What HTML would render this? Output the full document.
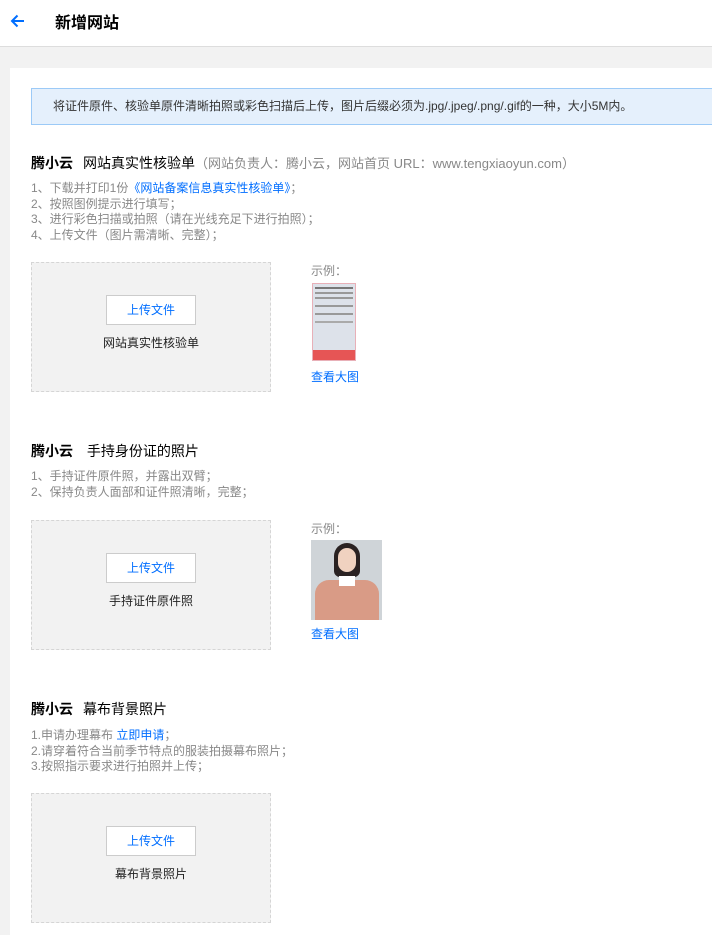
<!DOCTYPE html>
<html><head><meta charset="utf-8"><style>
*{margin:0;padding:0;box-sizing:border-box}
body{width:712px;height:935px;overflow:hidden;background:#f2f2f2;font-family:"Liberation Sans","Noto Sans CJK SC",sans-serif;font-size:12px;color:#333;position:relative}
.a{position:absolute;white-space:nowrap}
.hdr{position:absolute;left:0;top:0;width:712px;height:47px;background:#fff;border-bottom:1px solid #ddd}
.card{position:absolute;left:10px;top:68px;width:702px;height:867px;background:#fff}
.note{position:absolute;left:31px;top:88px;width:690px;height:37px;background:#e5f0fc;border:1px solid #9ccaf7;line-height:35px;padding-left:21px;color:#333}
.t{font-size:14px;color:#000;line-height:16px}
.t b{font-weight:bold;margin-right:10px}
.g{color:#888;line-height:15.5px}
.blue{color:#006eff}
.box{position:absolute;left:31px;width:240px;height:130px;background:#f2f2f2;border:1px dashed #d5d5d5}
.btn{position:absolute;left:74px;top:32px;width:90px;height:30px;background:#fff;border:1px solid #ccc;color:#006eff;text-align:center;line-height:28px}
.lbl{position:absolute;left:0;width:238px;top:71px;text-align:center;color:#222}
.ex{color:#888}
</style></head><body>
<div class="hdr">
<svg class="a" style="left:9px;top:12px" width="18" height="18" viewBox="0 0 18 18"><path d="M15 9H3M8.5 3.5L3 9l5.5 5.5" stroke="#006eff" stroke-width="2" fill="none"/></svg>
<div class="a" style="left:55px;top:9px;font-size:16px;font-weight:bold;color:#000">新增网站</div>
</div>
<div class="card"></div>
<div class="note">将证件原件、核验单原件清晰拍照或彩色扫描后上传，图片后缀必须为.jpg/.jpeg/.png/.gif的一种，大小5M内。</div>

<div class="a t" style="left:31px;top:155px"><b>腾小云</b>网站真实性核验单<span style="color:#888;font-size:13px">（网站负责人：腾小云，网站首页 URL：www.tengxiaoyun.com）</span></div>
<div class="a g" style="left:31px;top:181px">1、下载并打印1份<span class="blue">《网站备案信息真实性核验单》</span>；<br>2、按照图例提示进行填写；<br>3、进行彩色扫描或拍照（请在光线充足下进行拍照）；<br>4、上传文件（图片需清晰、完整）；</div>
<div class="box" style="top:262px"><div class="btn">上传文件</div><div class="lbl">网站真实性核验单</div></div>
<div class="a ex" style="left:311px;top:262px">示例：</div>
<div class="a" style="left:312px;top:283px;width:44px;height:78px;background:#dde2ea;border:1px solid #e8b0b8">
<div style="margin:3px 2px;height:2px;background:#777"></div><div style="margin:3px 2px;height:2px;background:#999"></div><div style="margin:3px 2px;height:2px;background:#999"></div><div style="margin:6px 2px;height:2px;background:#999"></div><div style="margin:6px 2px;height:2px;background:#999"></div><div style="margin:6px 2px;height:2px;background:#aaa"></div>
<div style="position:absolute;left:0;bottom:0;width:42px;height:10px;background:#e65555"></div></div>
<div class="a blue" style="left:311px;top:368px">查看大图</div>

<div class="a t" style="left:31px;top:443px"><b>腾小云</b>&nbsp;手持身份证的照片</div>
<div class="a g" style="left:31px;top:469px">1、手持证件原件照，并露出双臂；<br>2、保持负责人面部和证件照清晰，完整；</div>
<div class="box" style="top:520px"><div class="btn">上传文件</div><div class="lbl">手持证件原件照</div></div>
<div class="a ex" style="left:311px;top:520px">示例：</div>
<div class="a" style="left:311px;top:540px;width:71px;height:80px;background:#cfd4d8;overflow:hidden">
<div style="position:absolute;left:23px;top:3px;width:26px;height:34px;border-radius:13px 13px 6px 6px;background:#2a2222"></div>
<div style="position:absolute;left:27px;top:8px;width:18px;height:24px;border-radius:9px;background:#f0d2c0"></div>
<div style="position:absolute;left:4px;top:40px;width:64px;height:45px;border-radius:14px 14px 0 0;background:#d99b86"></div>
<div style="position:absolute;left:28px;top:36px;width:16px;height:10px;background:#fff"></div></div>
<div class="a blue" style="left:311px;top:625px">查看大图</div>

<div class="a t" style="left:31px;top:701px"><b>腾小云</b>幕布背景照片</div>
<div class="a g" style="left:31px;top:728px">1.申请办理幕布 <span class="blue">立即申请</span>；<br>2.请穿着符合当前季节特点的服装拍摄幕布照片；<br>3.按照指示要求进行拍照并上传；</div>
<div class="box" style="top:793px"><div class="btn">上传文件</div><div class="lbl">幕布背景照片</div></div>
</body></html>
